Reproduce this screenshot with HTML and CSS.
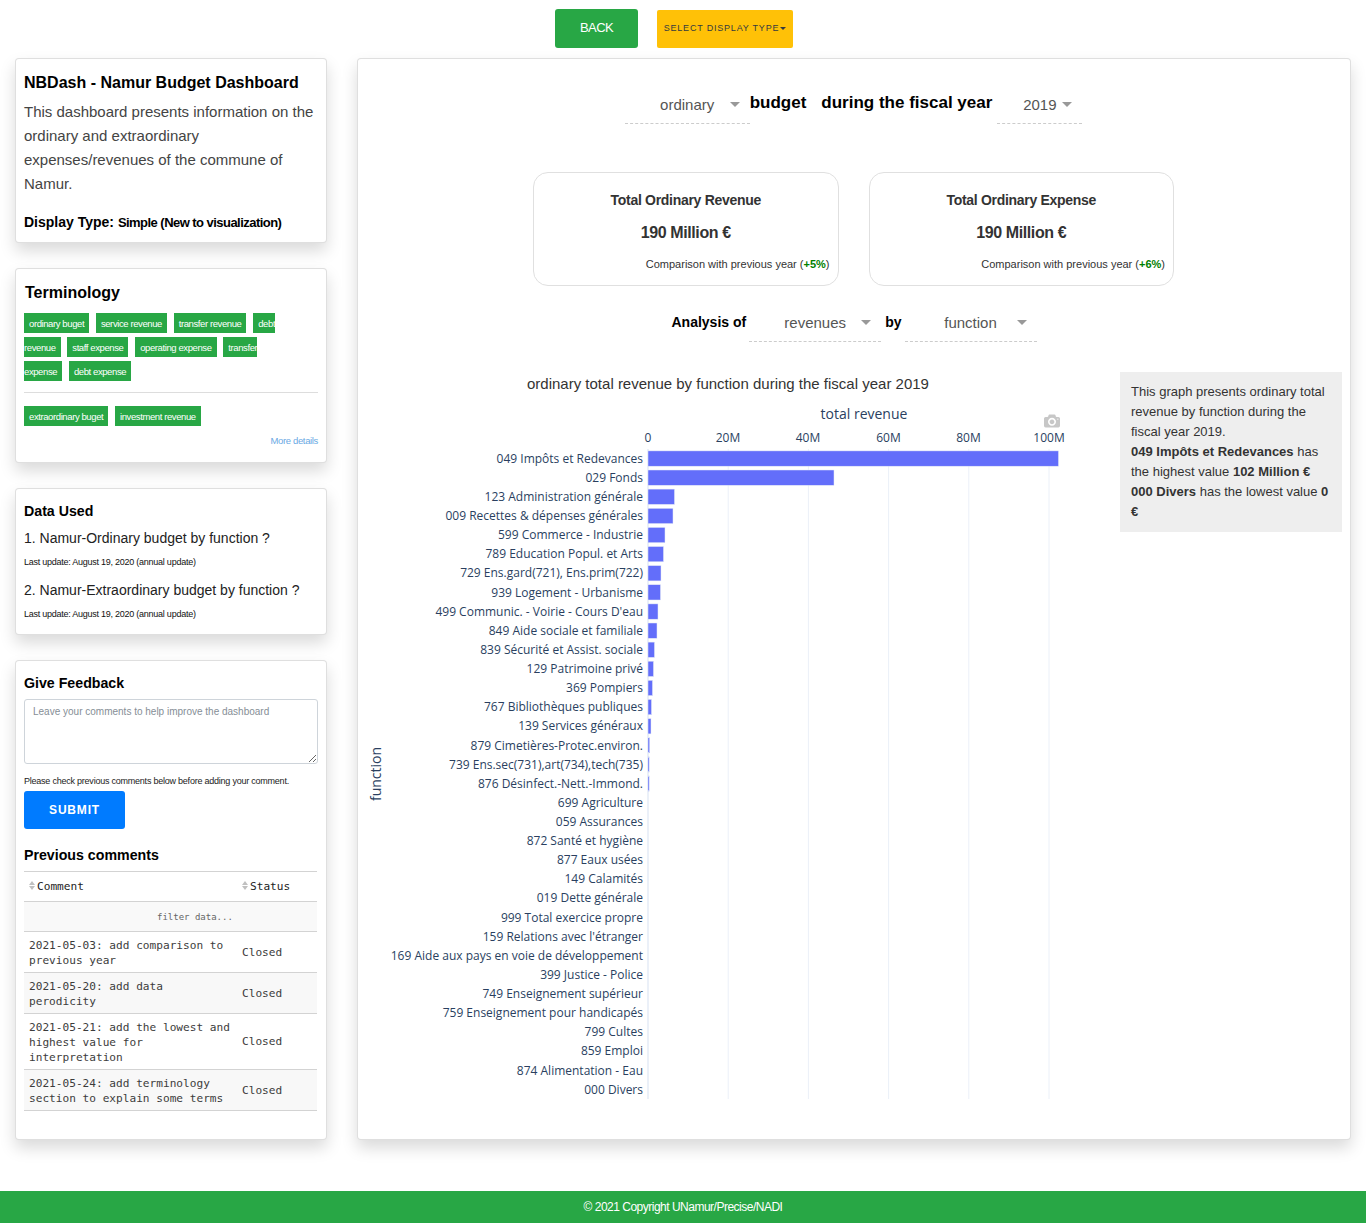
FILE: index.html
```html
<!DOCTYPE html>
<html lang="en">
<head>
	<meta charset="utf-8">
	<title>NBDash - Namur Budget Dashboard</title>
	<link rel="stylesheet" href="styles.css">
</head>
<body>

<header class="topbar">
	<a class="btn-back">BACK</a>
	<a class="btn-type">SELECT DISPLAY TYPE<span class="btn-caret"></span></a>
</header>

<div class="layout">
	<aside class="sidebar">
		<section class="card card-intro">
			<h1>NBDash - Namur Budget Dashboard</h1>
			<p class="intro-text">This dashboard presents information on the ordinary and extraordinary expenses/revenues of the commune of Namur.</p>
			<p class="display-type"><strong>Display Type:</strong> <span>Simple (New to visualization)</span></p>
		</section>

		<section class="card card-terms">
			<h2 class="terms-title">Terminology</h2>
			<p class="tags"><span class="tag">ordinary buget</span> <span class="tag">service revenue</span> <span class="tag">transfer revenue</span> <span class="tag">debt revenue</span> <span class="tag">staff expense</span> <span class="tag">operating expense</span> <span class="tag">transfer expense</span> <span class="tag">debt expense</span></p>
			<hr>
			<p class="tags"><span class="tag">extraordinary buget</span> <span class="tag">investment revenue</span></p>
			<a class="more-link">More details</a>
		</section>

		<section class="card card-data">
			<h2>Data Used</h2>
			<p class="data-name">1. Namur-Ordinary budget by function ?</p>
			<p class="data-date">Last update: August 19, 2020 (annual update)</p>
			<p class="data-name">2. Namur-Extraordinary budget by function ?</p>
			<p class="data-date">Last update: August 19, 2020 (annual update)</p>
		</section>

		<section class="card card-feedback">
			<h2>Give Feedback</h2>
			<textarea class="feedback-box" placeholder="Leave your comments to help improve the dashboard"></textarea>
			<p class="feedback-note">Please check previous comments below before adding your comment.</p>
			<button class="btn-submit">SUBMIT</button>
			<h2 class="comments-title">Previous comments</h2>
			<table class="comments">
				<thead>
					<tr>
						<th class="col-comment"><span class="sort"></span>Comment</th>
						<th><span class="sort"></span>Status</th>
					</tr>
				</thead>
				<tbody>
					<tr class="filter-row"><td colspan="2">filter data...</td></tr>
					<tr><td>2021-05-03: add comparison to previous year</td><td>Closed</td></tr>
					<tr class="odd"><td>2021-05-20: add data perodicity</td><td>Closed</td></tr>
					<tr><td>2021-05-21: add the lowest and highest value for interpretation</td><td>Closed</td></tr>
					<tr class="odd"><td>2021-05-24: add terminology section to explain some terms</td><td>Closed</td></tr>
				</tbody>
			</table>
		</section>
	</aside>

	<main class="card main">
		<div class="selector-row selector-budget">
			<div class="dropdown dropdown-budget">ordinary<span class="arrow"></span></div>
			<span class="selector-label">budget</span>
			<span class="selector-label label-fiscal">during the fiscal year</span>
			<div class="dropdown dropdown-year">2019<span class="arrow"></span></div>
		</div>

		<div class="stats">
			<div class="stat">
				<h3>Total Ordinary Revenue</h3>
				<p class="stat-value">190 Million €</p>
				<p class="stat-compare">Comparison with previous year (<b>+5%</b>)</p>
			</div>
			<div class="stat">
				<h3>Total Ordinary Expense</h3>
				<p class="stat-value">190 Million €</p>
				<p class="stat-compare">Comparison with previous year (<b>+6%</b>)</p>
			</div>
		</div>

		<div class="selector-row selector-analysis">
			<span class="selector-label">Analysis of</span>
			<div class="dropdown dropdown-wide">revenues<span class="arrow"></span></div>
			<span class="selector-label">by</span>
			<div class="dropdown dropdown-wide">function<span class="arrow"></span></div>
		</div>

		<div class="chart-row">
			<svg class="chart" viewBox="358 372 752 745" width="752" height="745">
				<text class="chart-title" x="527" y="389">ordinary total revenue by function during the fiscal year 2019</text>
				<text class="axis-title" x="864" y="419" text-anchor="middle">total revenue</text>
				<text class="axis-title" transform="translate(381 774) rotate(-90)" text-anchor="middle">function</text>

				<svg x="1044" y="413" width="16" height="16" viewBox="0 0 1000 1000">
					<path class="camera" transform="matrix(1 0 0 -1 0 850)" d="m500 450c-83 0-150-67-150-150 0-83 67-150 150-150 83 0 150 67 150 150 0 83-67 150-150 150z m400 150h-120c-16 0-34 13-39 29l-31 93c-6 15-23 28-40 28h-340c-16 0-34-13-39-28l-31-93c-6-16-23-29-40-29h-120c-55 0-100-45-100-100v-450c0-55 45-100 100-100h800c55 0 100 45 100 100v450c0 55-45 100-100 100z m-400-550c-138 0-250 112-250 250 0 138 112 250 250 250 138 0 250-112 250-250 0-138-112-250-250-250z m365 380c-19 0-35 16-35 35 0 19 16 35 35 35 19 0 35-16 35-35 0-19-16-35-35-35z"/>
				</svg>

				<g class="ticks" text-anchor="middle">
					<text x="648" y="442">0</text>
					<text x="728" y="442">20M</text>
					<text x="808" y="442">40M</text>
					<text x="888.5" y="442">60M</text>
					<text x="968.5" y="442">80M</text>
					<text x="1049" y="442">100M</text>
				</g>

				<g class="grid">
					<line x1="728.2" y1="449" x2="728.2" y2="1099"/>
					<line x1="808.4" y1="449" x2="808.4" y2="1099"/>
					<line x1="888.6" y1="449" x2="888.6" y2="1099"/>
					<line x1="968.8" y1="449" x2="968.8" y2="1099"/>
					<line x1="1049" y1="449" x2="1049" y2="1099"/>
					<line class="zero" x1="648" y1="449" x2="648" y2="1099"/>
				</g>

				<g class="bars">
					<rect x="648" y="450.9" width="410.5" height="15.3"/>
					<rect x="648" y="470" width="186" height="15.3"/>
					<rect x="648" y="489.1" width="26.5" height="15.3"/>
					<rect x="648" y="508.3" width="25" height="15.3"/>
					<rect x="648" y="527.4" width="17" height="15.3"/>
					<rect x="648" y="546.5" width="15.5" height="15.3"/>
					<rect x="648" y="565.6" width="13" height="15.3"/>
					<rect x="648" y="584.7" width="12.5" height="15.3"/>
					<rect x="648" y="603.9" width="10" height="15.3"/>
					<rect x="648" y="623" width="9" height="15.3"/>
					<rect x="648" y="642.1" width="6.5" height="15.3"/>
					<rect x="648" y="661.2" width="5.5" height="15.3"/>
					<rect x="648" y="680.3" width="4.5" height="15.3"/>
					<rect x="648" y="699.4" width="3.5" height="15.3"/>
					<rect x="648" y="718.6" width="3" height="15.3"/>
					<rect x="648" y="737.7" width="1.7" height="15.3"/>
					<rect x="648" y="756.8" width="1.2" height="15.3"/>
					<rect x="648" y="775.9" width="1.2" height="15.3"/>
				</g>

				<g class="labels" text-anchor="end">
					<text x="643" y="463">049 Impôts et Redevances</text>
					<text x="643" y="482">029 Fonds</text>
					<text x="643" y="501">123 Administration générale</text>
					<text x="643" y="520">009 Recettes &amp; dépenses générales</text>
					<text x="643" y="539">599 Commerce - Industrie</text>
					<text x="643" y="558">789 Education Popul. et Arts</text>
					<text x="643" y="577">729 Ens.gard(721), Ens.prim(722)</text>
					<text x="643" y="597">939 Logement - Urbanisme</text>
					<text x="643" y="616">499 Communic. - Voirie - Cours D'eau</text>
					<text x="643" y="635">849 Aide sociale et familiale</text>
					<text x="643" y="654">839 Sécurité et Assist. sociale</text>
					<text x="643" y="673">129 Patrimoine privé</text>
					<text x="643" y="692">369 Pompiers</text>
					<text x="643" y="711">767 Bibliothèques publiques</text>
					<text x="643" y="730">139 Services généraux</text>
					<text x="643" y="750">879 Cimetières-Protec.environ.</text>
					<text x="643" y="769">739 Ens.sec(731),art(734),tech(735)</text>
					<text x="643" y="788">876 Désinfect.-Nett.-Immond.</text>
					<text x="643" y="807">699 Agriculture</text>
					<text x="643" y="826">059 Assurances</text>
					<text x="643" y="845">872 Santé et hygiène</text>
					<text x="643" y="864">877 Eaux usées</text>
					<text x="643" y="883">149 Calamités</text>
					<text x="643" y="902">019 Dette générale</text>
					<text x="643" y="922">999 Total exercice propre</text>
					<text x="643" y="941">159 Relations avec l'étranger</text>
					<text x="643" y="960">169 Aide aux pays en voie de développement</text>
					<text x="643" y="979">399 Justice - Police</text>
					<text x="643" y="998">749 Enseignement supérieur</text>
					<text x="643" y="1017">759 Enseignement pour handicapés</text>
					<text x="643" y="1036">799 Cultes</text>
					<text x="643" y="1055">859 Emploi</text>
					<text x="643" y="1075">874 Alimentation - Eau</text>
					<text x="643" y="1094">000 Divers</text>
				</g>
			</svg>

			<div class="note">
				This graph presents ordinary total revenue by function during the fiscal year 2019.<br>
				<b>049 Impôts et Redevances</b> has the highest value <b>102 Million €</b><br>
				<b>000 Divers</b> has the lowest value <b>0 €</b>
			</div>
		</div>
	</main>
</div>

<footer class="footer">© 2021 Copyright UNamur/Precise/NADI</footer>

</body>
</html>
```

FILE: styles.css
```css
* {
	box-sizing: border-box;
}

body {
	margin: 0;
	font-family: "Liberation Sans", Arial, sans-serif;
	font-size: 14px;
	color: #212529;
	background: #fff;
}

h1, h2, h3, p {
	margin: 0;
}

.topbar {
	display: flex;
	align-items: flex-start;
	gap: 19px;
	height: 58px;
	padding: 9px 0 0 555px;
}

.btn-back {
	width: 83px;
	height: 39px;
	line-height: 38px;
	text-align: center;
	font-size: 13px;
	letter-spacing: -0.6px;
	color: #fff;
	background: #28a745;
	border-radius: 3px;
}

.btn-type {
	display: flex;
	align-items: center;
	justify-content: center;
	width: 136px;
	height: 38px;
	margin-top: 1px;
	padding-bottom: 2px;
	font-size: 9px;
	letter-spacing: 0.8px;
	white-space: nowrap;
	color: #343a40;
	background: #ffc107;
	border-radius: 2px;
}

.btn-caret {
	width: 0;
	height: 0;
	margin-left: 1px;
	border-top: 3px solid #343a40;
	border-left: 3px solid transparent;
	border-right: 3px solid transparent;
}

.layout {
	display: grid;
	grid-template-columns: 312px 994px;
	column-gap: 30px;
	align-items: start;
	padding-left: 15px;
}

.sidebar {
	display: flex;
	flex-direction: column;
	gap: 25px;
}

.card {
	background: #fff;
	border: 1px solid rgba(0, 0, 0, 0.125);
	border-radius: 4px;
	box-shadow: 0 8px 16px rgba(0, 0, 0, 0.15);
}

/* sidebar cards */
.card-intro {
	height: 185px;
	padding: 13px 8px 0;
}

.card-intro h1 {
	font-size: 16px;
	line-height: 21px;
	white-space: nowrap;
	color: #000;
}

.intro-text {
	margin-top: 7px;
	font-size: 15px;
	line-height: 24px;
	color: #444;
}

.display-type {
	margin-top: 14px;
	font-size: 14px;
	line-height: 24px;
	color: #000;
}

.display-type span {
	font-size: 13px;
	font-weight: bold;
	letter-spacing: -0.54px;
}

.card-terms {
	height: 195px;
	padding: 13px 8px 0;
}

.terms-title {
	margin-left: 1px;
	font-size: 16px;
	line-height: 21px;
	color: #000;
}

.tags {
	margin-top: 8px;
	width: 270px;
	font-size: 9.5px;
	line-height: 24px;
	letter-spacing: -0.4px;
}

.tag {
	padding: 4.5px 5px;
	margin-right: 4.5px;
	color: #fff;
	background: #28a745;
}

.card-terms hr {
	margin: 9px 0 0;
	border: 0;
	border-top: 1px solid #ddd;
}

.card-terms hr + .tags {
	margin-top: 11px;
	width: auto;
}

.more-link {
	display: block;
	margin-top: 7px;
	text-align: right;
	font-size: 9.5px;
	letter-spacing: -0.35px;
	color: #6aa9e4;
}

.card-data {
	height: 147px;
	padding: 14px 8px 0;
}

.card-data h2,
.card-feedback h2 {
	font-size: 14.2px;
	line-height: 17px;
	color: #000;
}

.data-name {
	margin-top: 9px;
	font-size: 14px;
	line-height: 18px;
	color: #222;
}

.data-date {
	margin-top: 8px;
	font-size: 9px;
	line-height: 14px;
	letter-spacing: -0.25px;
	color: #111;
}

.data-date + .data-name {
	margin-top: 12px;
}

.card-feedback {
	height: 480px;
	padding: 14px 8px 0;
}

.feedback-box {
	display: block;
	width: 294px;
	height: 65px;
	margin-top: 7px;
	padding: 4px 8px;
	font-family: "Liberation Sans", Arial, sans-serif;
	font-size: 10px;
	line-height: 15px;
	color: #555;
	border: 1px solid #ced4da;
	border-radius: 3px;
}

.feedback-box::placeholder {
	color: #868e96;
	opacity: 1;
}

.feedback-note {
	margin-top: 10px;
	font-size: 9px;
	line-height: 14px;
	letter-spacing: -0.23px;
	white-space: nowrap;
	color: #222;
}

.btn-submit {
	display: block;
	width: 101px;
	height: 38px;
	margin-top: 3px;
	padding: 0;
	font-family: inherit;
	font-size: 12px;
	font-weight: bold;
	letter-spacing: 0.8px;
	color: #fff;
	background: #007bff;
	border: 0;
	border-radius: 3px;
}

.card-feedback .comments-title {
	margin-top: 18px;
}

.comments {
	width: 293px;
	margin-top: 7px;
	border-collapse: collapse;
	table-layout: fixed;
	font-family: "DejaVu Sans Mono", monospace;
	font-size: 11.13px;
	line-height: 15px;
	color: #3c3c3c;
}

.comments th,
.comments td {
	padding: 5px;
	border-top: 1px solid #d3d3d3;
	border-bottom: 1px solid #d3d3d3;
	text-align: left;
	vertical-align: middle;
}

.comments td:first-child {
	padding-top: 6px;
	padding-bottom: 4px;
}

.comments th {
	height: 30px;
	font-weight: normal;
	color: #222;
}

.col-comment {
	width: 213px;
}

/* up and down triangles of the sort control */
.sort {
	display: inline-block;
	width: 8px;
	height: 10px;
	vertical-align: -1px;
}

.sort::before,
.sort::after {
	content: "";
	display: block;
	width: 0;
	height: 0;
	margin-bottom: 1px;
	border-left: 3.5px solid transparent;
	border-right: 3.5px solid transparent;
}

.sort::before {
	border-bottom: 4px solid #c0c0c0;
}

.sort::after {
	border-top: 4px solid #c0c0c0;
}

.comments .filter-row td {
	height: 30px;
	padding-left: 133px;
	font-size: 9px;
	color: #666;
	background: #f9f9f9;
}

.comments .odd td {
	background: #f8f8f8;
}

/* main card */
.main {
	height: 1082px;
	padding-top: 27px;
}

.selector-row {
	display: flex;
	justify-content: center;
	align-items: flex-start;
}

.selector-budget {
	padding-right: 1px;
}

.dropdown {
	position: relative;
	width: 125px;
	height: 38px;
	padding-top: 10px;
	text-align: center;
	font-size: 15px;
	line-height: 18px;
	color: #555;
	border-bottom: 1px dashed #ccc;
}

.arrow {
	position: absolute;
	top: 16px;
	right: 10px;
	border-top: 5px solid #999;
	border-left: 5px solid transparent;
	border-right: 5px solid transparent;
}

.dropdown-year {
	width: 85px;
	margin-left: 5px;
}

.dropdown-wide {
	width: 132px;
}

.selector-label {
	padding-top: 7px;
	font-size: 17px;
	font-weight: bold;
	line-height: 20px;
	color: #000;
}

.label-fiscal {
	margin-left: 15px;
}

.selector-analysis {
	margin-top: 18px;
}

.selector-analysis .selector-label {
	padding-top: 9px;
	font-size: 14px;
	line-height: 18px;
}

.selector-analysis .selector-label + .dropdown {
	margin: 0 4px 0 3px;
}

.selector-analysis .dropdown:last-child {
	margin-right: 0;
}

.stats {
	display: flex;
	justify-content: center;
	gap: 30px;
	margin-top: 48px;
	padding-right: 1px;
}

.stat {
	width: 305.5px;
	height: 114px;
	padding: 18px 8px 0;
	border: 1px solid #e0e0e0;
	border-radius: 15px;
	color: #333;
}

.stat h3 {
	font-size: 14px;
	line-height: 18px;
	font-weight: bold;
	text-align: center;
	letter-spacing: -0.3px;
}

.stat-value {
	margin-top: 14px;
	font-size: 16px;
	line-height: 20px;
	font-weight: bold;
	text-align: center;
	letter-spacing: -0.4px;
}

.stat-compare {
	margin-top: 14px;
	font-size: 11px;
	line-height: 14px;
	text-align: right;
}

.stat-compare b {
	color: #008000;
}

.chart-row {
	display: flex;
	align-items: flex-start;
	margin-top: 30px;
}

.chart {
	display: block;
	flex: none;
}

.chart-title {
	font-family: "Liberation Sans", Arial, sans-serif;
	font-size: 15px;
	fill: #333;
}

.axis-title {
	font-family: "Open Sans", sans-serif;
	font-size: 14px;
	fill: #2a3f5f;
}

.ticks text {
	font-family: "Open Sans", sans-serif;
	font-size: 12px;
	fill: #2a3f5f;
}

.labels text {
	font-family: "Open Sans", sans-serif;
	font-size: 12px;
	fill: #2a3f5f;
}

.grid line {
	stroke: #ebf0f8;
	stroke-width: 1;
}

.grid .zero {
	stroke-width: 2;
}

.bars rect {
	fill: #636efa;
	stroke: #e5ecf6;
	stroke-width: 0.5;
}

.camera {
	fill: rgba(68, 68, 68, 0.3);
}

.note {
	width: 222px;
	height: 160px;
	margin-left: 10px;
	padding: 10px 10px 0 11px;
	font-size: 13px;
	line-height: 20px;
	color: #333;
	background: #eee;
}

.footer {
	height: 32px;
	margin-top: 51px;
	text-align: center;
	font-size: 12px;
	line-height: 32px;
	letter-spacing: -0.5px;
	color: #fff;
	background: #28a745;
}
```
